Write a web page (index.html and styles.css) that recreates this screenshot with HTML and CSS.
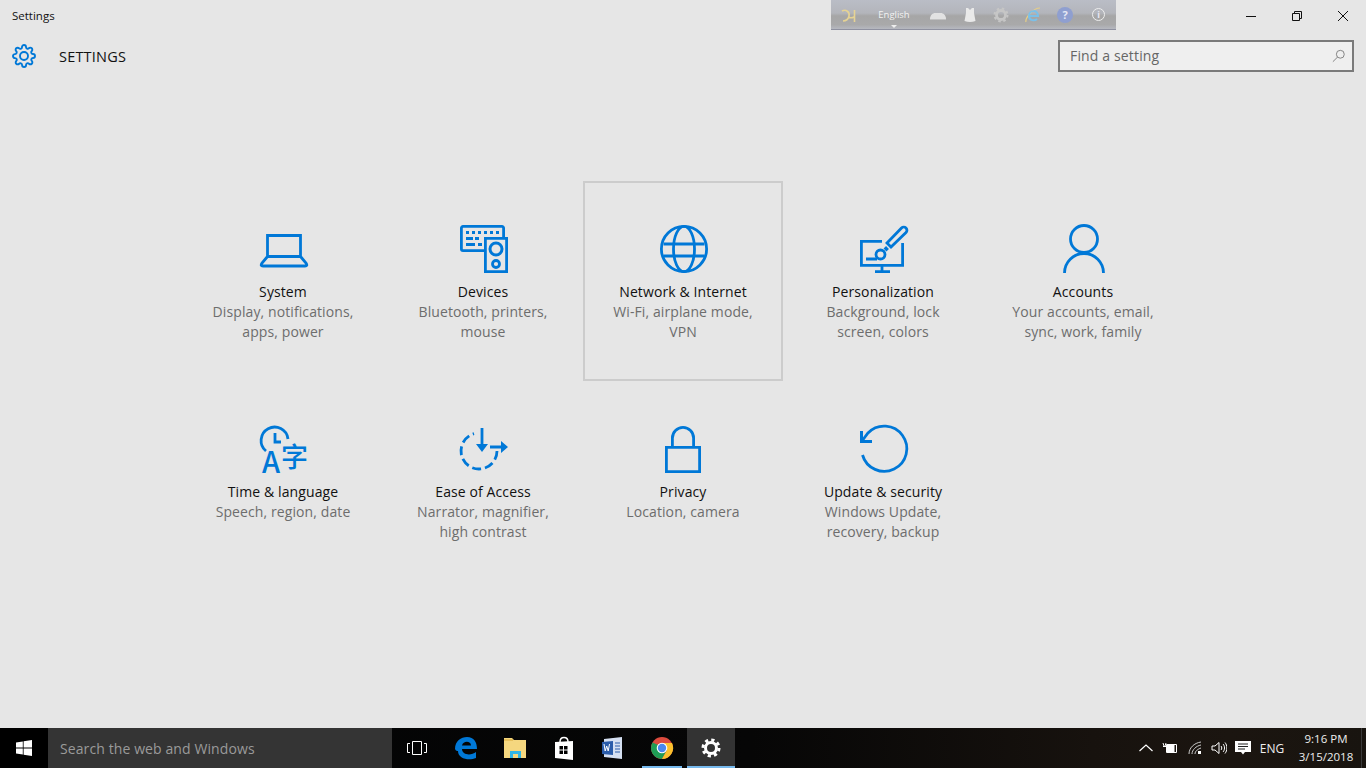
FILE: index.html
```html
<!DOCTYPE html>
<html lang="en">
<head>
    <meta charset="UTF-8">
    <title>Settings</title>
    <link rel="stylesheet" href="styles.css">
</head>
<body>
    <div class="window">
        <div class="titlebar">
            <span class="app-name">Settings</span>
            <div class="window-controls">
                <svg class="win-btn" viewBox="0 0 46 32"><path d="M18 16.5h10" /></svg>
                <svg class="win-btn" viewBox="0 0 46 32"><path d="M18.500 13.500h7v7h-7zM20.500 13.500v-2h7v7h-2" /></svg>
                <svg class="win-btn" viewBox="0 0 46 32"><path d="M18 11l10 10M28 11l-10 10" /></svg>
            </div>
        </div>

        <!-- floating language bar -->
        <div class="langbar">
            <svg class="lb-icon" viewBox="0 0 16 16"><path d="M1 4C5 2 9 5 8 9 7 13 4 14 2 14M7 10c2 1 4 1 6 0M13.500 3v12" fill="none" stroke="#e6d394" stroke-width="1.600" /></svg>
            <div class="lb-lang">English<span class="lb-arrow"></span></div>
            <svg class="lb-icon lb-kbd" viewBox="0 0 16 16"><path d="M0 12c0-4 3-6 5-6h6c2 0 5 2 5 6z" fill="#e2e2e2" /><path d="M0 12.500h16" stroke="#c2c2c2" /></svg>
            <svg class="lb-icon lb-dress" viewBox="0 0 16 16"><path d="M4 1h2l2 2 2-2h2v5l1.500 8q-5.500 2-11 0L4 6z" fill="#e9e9e9" /></svg>
            <svg class="lb-icon lb-gear" viewBox="0 0 16 16"><circle cx="8" cy="8" r="4.500" fill="none" stroke="#c6c6c6" stroke-width="2.800" /><circle cx="8" cy="8" r="6.500" fill="none" stroke="#c6c6c6" stroke-width="2" stroke-dasharray="2.500 2.600" /></svg>
            <svg class="lb-icon lb-ie" viewBox="0 0 16 16"><path d="M1 15C0 11 8 1 15 1" fill="none" stroke="#e7cf85" stroke-width="1.200" /><path d="M4 9h9c0-7-9-6-9 0 0 5 6 5 8 3" fill="none" stroke="#7cc0e8" stroke-width="2" /></svg>
            <div class="lb-help">?</div>
            <div class="lb-info">i</div>
        </div>

        <header class="page-header">
            <svg class="gear" viewBox="0 0 24 24"><circle cx="12" cy="12" r="4" /><path d="M19.400 15a1.650 1.650 0 0 0 .33 1.820l.06.06a2 2 0 0 1 0 2.830 2 2 0 0 1-2.830 0l-.06-.06a1.650 1.650 0 0 0-1.820-.33 1.650 1.650 0 0 0-1 1.510V21a2 2 0 0 1-2 2 2 2 0 0 1-2-2v-.09A1.650 1.650 0 0 0 9 19.400a1.650 1.650 0 0 0-1.820.33l-.06.06a2 2 0 0 1-2.830 0 2 2 0 0 1 0-2.830l.06-.06a1.650 1.650 0 0 0 .33-1.820 1.650 1.650 0 0 0-1.510-1H3a2 2 0 0 1-2-2 2 2 0 0 1 2-2h.09A1.650 1.650 0 0 0 4.600 9a1.650 1.650 0 0 0-.33-1.820l-.06-.06a2 2 0 0 1 0-2.830 2 2 0 0 1 2.830 0l.06.06a1.650 1.650 0 0 0 1.820.33H9a1.650 1.650 0 0 0 1-1.510V3a2 2 0 0 1 2-2 2 2 0 0 1 2 2v.09a1.650 1.650 0 0 0 1 1.510 1.650 1.650 0 0 0 1.820-.33l.06-.06a2 2 0 0 1 2.830 0 2 2 0 0 1 0 2.830l-.06.06a1.650 1.650 0 0 0-.33 1.820V9a1.650 1.650 0 0 0 1.510 1H21a2 2 0 0 1 2 2 2 2 0 0 1-2 2h-.09a1.650 1.650 0 0 0-1.510 1z" /></svg>
            <h1>SETTINGS</h1>
            <div class="search-box">
                <span>Find a setting</span>
                <svg class="search-icon" viewBox="0 0 16 16"><circle cx="9.500" cy="6" r="4.500" /><path d="M6.300 9.300L1 14.500" /></svg>
            </div>
        </header>

        <main class="tiles">
            <div class="tile">
                <svg class="tile-icon" viewBox="0 0 48 48"><path d="M7.500 10.500h33v21h-33zM7.500 31.500l-5.500 6.500Q0 41 3 41h42q3 0 1-3l-5.500-6.500" /></svg>
                <div class="tile-name">System</div>
                <div class="tile-desc">Display, notifications,<br>apps, power</div>
            </div>
            <div class="tile">
                <svg class="tile-icon" viewBox="0 0 48 48">
                    <path d="M24 25.600H3a1.600 1.600 0 0 1-1.600-1.600V3A1.600 1.600 0 0 1 3 1.400h39A1.600 1.600 0 0 1 43.600 3v9M25.400 13.400h21.200v33.200H25.400z" />
                    <circle cx="36" cy="24" r="6" stroke-width="3" />
                    <circle cx="36" cy="39" r="3.500" stroke-width="2.800" />
                    <path class="keys" d="M6 6h3v3H6zM12 6h3v3h-3zM18 6h3v3h-3zM24 6h3v3h-3zM30 6h3v3h-3zM36 6h3v3h-3zM6 12h7v3H6zM15 12h4v3h-4zM6 18h9v3H6zM18 18h4v3h-4z" />
                </svg>
                <div class="tile-name">Devices</div>
                <div class="tile-desc">Bluetooth, printers,<br>mouse</div>
            </div>
            <div class="tile tile-focus">
                <svg class="tile-icon" viewBox="0 0 48 48"><circle cx="24" cy="24" r="22.600" /><ellipse cx="24" cy="24" rx="10.500" ry="22.600" /><path d="M3.500 19h41M3.500 31h41" /></svg>
                <div class="tile-name">Network &amp; Internet</div>
                <div class="tile-desc">Wi-Fi, airplane mode,<br>VPN</div>
            </div>
            <div class="tile">
                <svg class="tile-icon" viewBox="0 0 48 48">
                    <path d="M22 16.400H1.400v24h41.200V18M22 41v6M15 46.600h15M6 34h11" />
                    <path d="M27 18L41.500 3A3 3 0 0 1 46 7.500L31 22z" />
                    <circle cx="20.500" cy="29.500" r="4.500" />
                    <path d="M25 25l2.500-2.500" stroke-width="4" />
                </svg>
                <div class="tile-name">Personalization</div>
                <div class="tile-desc">Background, lock<br>screen, colors</div>
            </div>
            <div class="tile">
                <svg class="tile-icon" viewBox="0 0 48 48"><circle cx="24" cy="14" r="13.500" /><path d="M4.500 48a19.500 19.500 0 0 1 39 0" /></svg>
                <div class="tile-name">Accounts</div>
                <div class="tile-desc">Your accounts, email,<br>sync, work, family</div>
            </div>
            <div class="tile">
                <svg class="tile-icon" viewBox="0 0 48 48">
                    <path d="M6 26A13.500 13.500 0 1 1 28 14M15 8v9h6" />
                    <text class="glyph" x="2" y="48" font-size="29">A</text>
                    <text class="glyph" x="21" y="42" font-size="27">字</text>
                </svg>
                <div class="tile-name">Time &amp; language</div>
                <div class="tile-desc">Speech, region, date</div>
            </div>
            <div class="tile">
                <svg class="tile-icon" viewBox="0 0 48 48">
                    <path d="M37 26A18 18 0 1 1 14 8.700" stroke-dasharray="9 4" />
                    <path d="M22 3v20M30 22h12" />
                    <path class="keys" d="M16 19h12l-6 8zM41 16l7 6-7 6z" />
                </svg>
                <div class="tile-name">Ease of Access</div>
                <div class="tile-desc">Narrator, magnifier,<br>high contrast</div>
            </div>
            <div class="tile">
                <svg class="tile-icon" viewBox="0 0 48 48"><path d="M6.400 22.400h33.200v24.200H6.400zM12.400 22v-9a10.600 10.600 0 0 1 21.200 0v9" /></svg>
                <div class="tile-name">Privacy</div>
                <div class="tile-desc">Location, camera</div>
            </div>
            <div class="tile">
                <svg class="tile-icon" viewBox="0 0 48 48"><path d="M2.500 30A22.600 22.600 0 1 0 8 8L2 16" /><path class="keys" d="M0 6h3v9h9v3H0z" /></svg>
                <div class="tile-name">Update &amp; security</div>
                <div class="tile-desc">Windows Update,<br>recovery, backup</div>
            </div>
        </main>
    </div>

    <footer class="taskbar">
        <div class="start">
            <svg viewBox="0 0 16 16" class="start-logo"><path d="M0 2.400l6.800-1v6.200H0zM7.600 1.300L16 0v7.600H7.600zM0 8.400h6.800v6.200l-6.800-1zM7.600 8.400H16V16l-8.400-1.300z" /></svg>
        </div>
        <div class="search">Search the web and Windows</div>
        <div class="task-item">
            <svg viewBox="0 0 24 24" class="task-icon"><path d="M7.500 5.500h9v13h-9z" fill="none" stroke="#fff" /><path d="M5 7.500H2.500v9H5M19 7.500h2.500v9H19" fill="none" stroke="#fff" /></svg>
        </div>
        <div class="task-item">
            <svg viewBox="0 0 24 24" class="task-icon"><path d="M1 13C1 5 7 1 13 1c7 0 10 5 10 12H8c0 6 9 7 14 3v6c-7 3-18 1-18-7-1 0-2 0-3-2zM8 9.500h9c0-5-8-5-9 0z" fill="#0078d7" fill-rule="evenodd" /></svg>
        </div>
        <div class="task-item">
            <svg viewBox="0 0 24 24" class="task-icon"><path d="M1 2h8l2 2h12v18H1z" fill="#f5d77f" /><path d="M1 4h9" stroke="#d9a93b" /><path d="M7 22v-7h11v7h-3v-4H10v4z" fill="#2fb6e8" /></svg>
        </div>
        <div class="task-item">
            <svg viewBox="0 0 24 24" class="task-icon"><path d="M8 6c0-6 8-6 8 0" fill="none" stroke="#fff" stroke-width="1.500" /><path d="M3 6l18-1v19L3 22z" fill="#fff" /><path d="M7.500 10H11v3.500H7.500zM12 10h3.500v3.500H12zM7.500 14.500H11V18H7.500zM12 14.500h3.500V18H12z" fill="#000" /></svg>
        </div>
        <div class="task-item">
            <svg viewBox="0 0 24 24" class="task-icon"><path d="M3 3l18-2v22L3 21z" fill="#d5e0f2" /><path d="M1 6l11-1v14L1 18z" fill="#2a5caa" /><path d="M3 8l1.200 7 1.500-5 1.500 5L8.500 8" fill="none" stroke="#fff" /><path d="M14 7h5M14 10h5M14 13h5M14 16h5" stroke="#2a5caa" /></svg>
        </div>
        <div class="task-item task-open">
            <svg viewBox="0 0 24 24" class="task-icon"><circle cx="12" cy="12" r="11" fill="#dd4b3e" /><path d="M2.500 6.500A11 11 0 0 0 12 23l5.500-10z" fill="#1f9d55" /><path d="M12 7h10a11 11 0 0 1-10 16l5-9z" fill="#fbc02d" /><circle cx="12" cy="12" r="5.300" fill="#fff" /><circle cx="12" cy="12" r="4.200" fill="#4a88ee" /></svg>
        </div>
        <div class="task-item task-open task-active">
            <svg viewBox="0 0 24 24" class="task-icon">
                <circle cx="12" cy="12" r="5.500" fill="none" stroke="#fff" stroke-width="3" />
                <circle cx="12" cy="12" r="8" fill="none" stroke="#fff" stroke-width="3" stroke-dasharray="3.200 3.083" />
            </svg>
        </div>

        <div class="tray">
            <svg viewBox="0 0 16 16" class="tray-icon"><path d="M1.500 11L8 5l6.500 6" fill="none" stroke="#fff" stroke-width="1.200" /></svg>
            <svg viewBox="0 0 16 16" class="tray-icon tray-batt"><path d="M4.500 4.500h10v8h-10z" fill="none" stroke="#fff" /><path d="M5 5h7v7H5zM1 3l1 3M4 3L3 6M1 6.500h3" fill="#fff" stroke="#fff" /></svg>
            <svg viewBox="0 0 16 16" class="tray-icon"><path d="M2 14C2 8 7 3 14 2M5 14c0-4 4-8 9-9M8 14c0-3 3-5 6-6" fill="none" stroke="#ccc" /><path d="M11 11h3v3h-3z" fill="#fff" /></svg>
            <svg viewBox="0 0 16 16" class="tray-icon"><path d="M1 6h3l4-3.500v11L4 10H1zM10 6c1 1 1 3 0 4M12 4c2 2 2 6 0 8M14 2.500c2.500 3 2.500 8 0 11" fill="none" stroke="#fff" /></svg>
            <svg viewBox="0 0 16 16" class="tray-icon tray-note"><path d="M0 1h16v11H10l-2 2.500L6 12H0z" fill="#fff" /><path d="M3 4h10M3 6.500h10M3 9h7" stroke="#222" /></svg>
            <span class="tray-lang">ENG</span>
            <div class="clock">
                <div>9:16 PM</div>
                <div>3/15/2018</div>
            </div>
            <div class="show-desktop"></div>
        </div>
    </footer>
</body>
</html>
```

FILE: styles.css
```css
html, body {
    height: 100%;
}
body {
    margin: 0;
    display: flex;
    flex-direction: column;
    overflow: hidden;
    font-family: "Open Sans", "Noto Sans", sans-serif;
    background-color: #e6e6e6;
}
.window {
    flex: 1;
    position: relative;
}
.titlebar {
    height: 32px;
    display: flex;
    justify-content: space-between;
}
.app-name {
    margin-left: 12px;
    font-size: 11.5px;
    line-height: 31px;
    color: #111;
}
.window-controls {
    display: flex;
}
.win-btn {
    width: 46px;
    height: 32px;
    fill: none;
    stroke: #111;
}

.langbar {
    position: absolute;
    left: 831px;
    top: 0;
    width: 285px;
    height: 30px;
    box-sizing: border-box;
    display: flex;
    align-items: center;
    border-bottom: 1px solid #8f91a0;
    background: linear-gradient(#babdc6 0%, #b3b5bb 45%, #a6a6a6 55%, #a9a9aa 85%, #b6b8c0 100%);
}
.lb-icon {
    width: 16px;
    height: 16px;
    flex: none;
}
.langbar > .lb-icon:first-child {
    margin-left: 10px;
}
.lb-lang {
    position: relative;
    width: 32px;
    margin-left: 21px;
    font-size: 9.5px;
    color: #f2f2f2;
    text-align: center;
}
.lb-arrow {
    position: absolute;
    left: 13px;
    top: 17px;
    border: 3px solid transparent;
    border-top: 3px solid #eee;
}
.lb-kbd {
    margin-left: 20px;
}
.lb-dress {
    margin-left: 16px;
}
.lb-gear {
    margin-left: 15px;
}
.lb-ie {
    margin-left: 16px;
}
.lb-help, .lb-info {
    border-radius: 50%;
    font-weight: bold;
    text-align: center;
    color: #e6e8f4;
}
.lb-help {
    width: 16px;
    height: 16px;
    margin-left: 16px;
    font-size: 11px;
    line-height: 16px;
    background-color: #8f9fd0;
}
.lb-info {
    width: 11px;
    height: 11px;
    margin-left: 19px;
    font-size: 9px;
    line-height: 11px;
    border: 1.500px solid #eee;
}

.page-header {
    height: 32px;
    margin-top: 8px;
    display: flex;
    align-items: center;
}
.gear {
    width: 24px;
    height: 24px;
    margin-left: 12px;
    fill: none;
    stroke: #0078d7;
    stroke-width: 1.900;
}
.page-header h1 {
    flex: 1;
    margin: 0 0 0 23px;
    font-size: 14.500px;
    font-weight: 500;
    letter-spacing: 0.2px;
    color: #111;
}
.search-box {
    width: 296px;
    height: 32px;
    margin-right: 12px;
    box-sizing: border-box;
    padding: 0 6px 0 10px;
    display: flex;
    align-items: center;
    justify-content: space-between;
    border: 2px solid #7a7a7a;
    background-color: #efefef;
    font-size: 14px;
    letter-spacing: 0.15px;
    color: #666;
}
.search-box span {
    padding-bottom: 2px;
}
.search-icon {
    width: 14px;
    height: 14px;
    fill: none;
    stroke: #777;
}

.tiles {
    margin: 109px 0 0 183px;
    display: grid;
    grid-template-columns: repeat(5, 200px);
    grid-auto-rows: 200px;
}
.tile {
    box-sizing: border-box;
    padding-top: 42px;
    border: 2px solid transparent;
    text-align: center;
    font-size: 14px;
    line-height: 20px;
    letter-spacing: 0.1px;
}
.tile-focus {
    border-color: #cccccc;
}
.tile-icon {
    display: block;
    width: 48px;
    height: 48px;
    margin: 0 0 9px 75px;
    overflow: visible;
    fill: none;
    stroke: #0078d7;
    stroke-width: 2.800;
}
.tile-icon .keys {
    fill: #0078d7;
    stroke: none;
}
.tile-icon .glyph {
    fill: #0078d7;
    stroke: none;
    font-weight: 500;
    font-family: "Noto Sans CJK SC", "Open Sans", sans-serif;
}
.tile-name {
    color: #111;
}
.tile-desc {
    color: #6d6d6d;
}

.taskbar {
    height: 40px;
    flex: none;
    display: flex;
    color: #fff;
    background: linear-gradient(90deg, #020304 0%, #060606 55%, #17120e 80%, #1b1510 90%, #18140f 100%);
}
.start {
    width: 48px;
    display: flex;
    align-items: center;
    justify-content: center;
    background-color: #000;
}
.start-logo {
    width: 16px;
    height: 16px;
    fill: #fff;
}
.search {
    width: 344px;
    box-sizing: border-box;
    padding-left: 12px;
    margin-right: 1px;
    line-height: 41px;
    font-size: 14px;
    letter-spacing: 0.1px;
    color: #9a9a9a;
    background-color: #343434;
}
.task-item {
    position: relative;
    width: 48px;
    margin-right: 1px;
    display: flex;
    align-items: center;
    justify-content: center;
}
.task-icon {
    width: 24px;
    height: 24px;
}
.task-open::after {
    content: "";
    position: absolute;
    left: 4px;
    right: 4px;
    bottom: 0;
    height: 2px;
    background-color: #76b9ed;
}
.task-active {
    background-color: #333;
}
.task-active::after {
    left: 0;
    right: 0;
}
.tray {
    margin-left: auto;
    display: flex;
    align-items: center;
}
.tray-icon {
    width: 16px;
    height: 16px;
    margin-right: 8px;
}
.tray-batt {
    margin-right: 9px;
}
.tray-note {
    margin-right: 5px;
}
.tray-lang {
    font-size: 12px;
    width: 32px;
    text-align: center;
    color: #eee;
}
.clock {
    width: 60px;
    margin-left: 8px;
    font-size: 11.500px;
    line-height: 18px;
    text-align: center;
    color: #eee;
}
.show-desktop {
    width: 1px;
    height: 40px;
    margin: 0 4px 0 5px;
    background-color: #3a3a3a;
}
```
